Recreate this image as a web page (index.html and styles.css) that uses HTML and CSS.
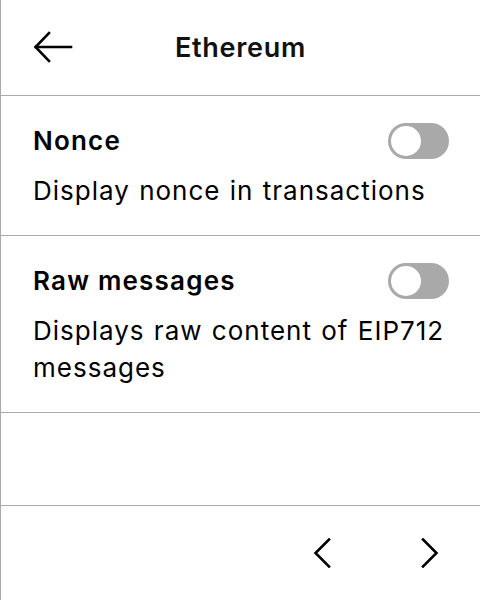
FILE: index.html
```html
<!DOCTYPE html>
<html lang="en">
<head>
<meta charset="utf-8">
<title>Ethereum</title>
<link rel="stylesheet" href="styles.css">
</head>
<body>
<div class="screen">
  <header class="header">
    <button class="back" aria-label="Back">
      <svg width="40" height="32" viewBox="0 0 40 32" fill="none" stroke="#000" stroke-width="2.6" stroke-linecap="square">
        <path d="M38 16H3"/>
        <path d="M16 2L2.5 16L16 30"/>
      </svg>
    </button>
    <h1 class="title">Ethereum</h1>
  </header>
  <section class="setting">
    <div class="setting-row">
      <span class="setting-name">Nonce</span>
      <span class="toggle"><span class="knob"></span></span>
    </div>
    <p class="setting-desc">Display nonce in transactions</p>
  </section>
  <section class="setting">
    <div class="setting-row">
      <span class="setting-name">Raw messages</span>
      <span class="toggle"><span class="knob"></span></span>
    </div>
    <p class="setting-desc">Displays raw content of EIP712 messages</p>
  </section>
  <div class="spacer"></div>
  <footer class="footer">
    <button class="nav" aria-label="Previous">
      <svg width="18" height="30" viewBox="0 0 18 30" fill="none" stroke="#000" stroke-width="2.6" stroke-linecap="square">
        <path d="M16 1.5L2.5 15L16 28.5"/>
      </svg>
    </button>
    <button class="nav" aria-label="Next">
      <svg width="18" height="30" viewBox="0 0 18 30" fill="none" stroke="#000" stroke-width="2.6" stroke-linecap="square">
        <path d="M2 1.5L15.5 15L2 28.5"/>
      </svg>
    </button>
  </footer>
</div>
</body>
</html>
```
FILE: styles.css
```css
* { box-sizing: border-box; }
html, body { margin: 0; padding: 0; background: #fff; }
body {
  font-family: Inter, "Noto Sans", "Liberation Sans", sans-serif;
  color: #000;
}
.screen {
  width: 480px;
  height: 600px;
  border-left: 1px solid #aaa;
  display: flex;
  flex-direction: column;
}
.header {
  position: relative;
  height: 96px;
  border-bottom: 1px solid #aaa;
  display: flex;
  align-items: center;
  justify-content: center;
  flex: none;
}
.back {
  position: absolute;
  left: 32px;
  top: 31px;
  padding: 0;
  border: 0;
  background: none;
  display: flex;
}
.title {
  margin: 0;
  font-size: 27px;
  font-weight: 600;
  letter-spacing: 0.7px;
  line-height: 32px;
  color: #111;
}
.setting {
  border-bottom: 1px solid #aaa;
  padding: 27px 32px 0 32px;
  flex: none;
}
.setting-row {
  display: flex;
  align-items: center;
  justify-content: space-between;
  height: 36px;
}
.setting-name {
  font-size: 26px;
  font-weight: 600;
  letter-spacing: 1.2px;
  line-height: 30px;
}
.setting-desc {
  margin: 13px 0 0 0;
  font-size: 26px;
  font-weight: 400;
  letter-spacing: 1px;
  word-spacing: 1px;
  line-height: 37px;
  padding-bottom: 26px;
}
.toggle {
  position: relative;
  width: 61px;
  height: 36px;
  border-radius: 18px;
  background: #a9a9a9;
  margin-right: -1px;
  flex: none;
}
.knob {
  position: absolute;
  left: 3px;
  top: 3px;
  width: 30px;
  height: 30px;
  border-radius: 50%;
  background: #fff;
}
.spacer {
  height: 93px;
  border-bottom: 1px solid #aaa;
  flex: none;
}
.footer {
  flex: 1;
  display: flex;
  justify-content: flex-end;
  align-items: center;
  gap: 48px;
  padding-right: 20px;
}
.nav {
  width: 60px;
  height: 60px;
  padding: 0;
  border: 0;
  background: none;
  display: flex;
  align-items: center;
  justify-content: center;
}
```
